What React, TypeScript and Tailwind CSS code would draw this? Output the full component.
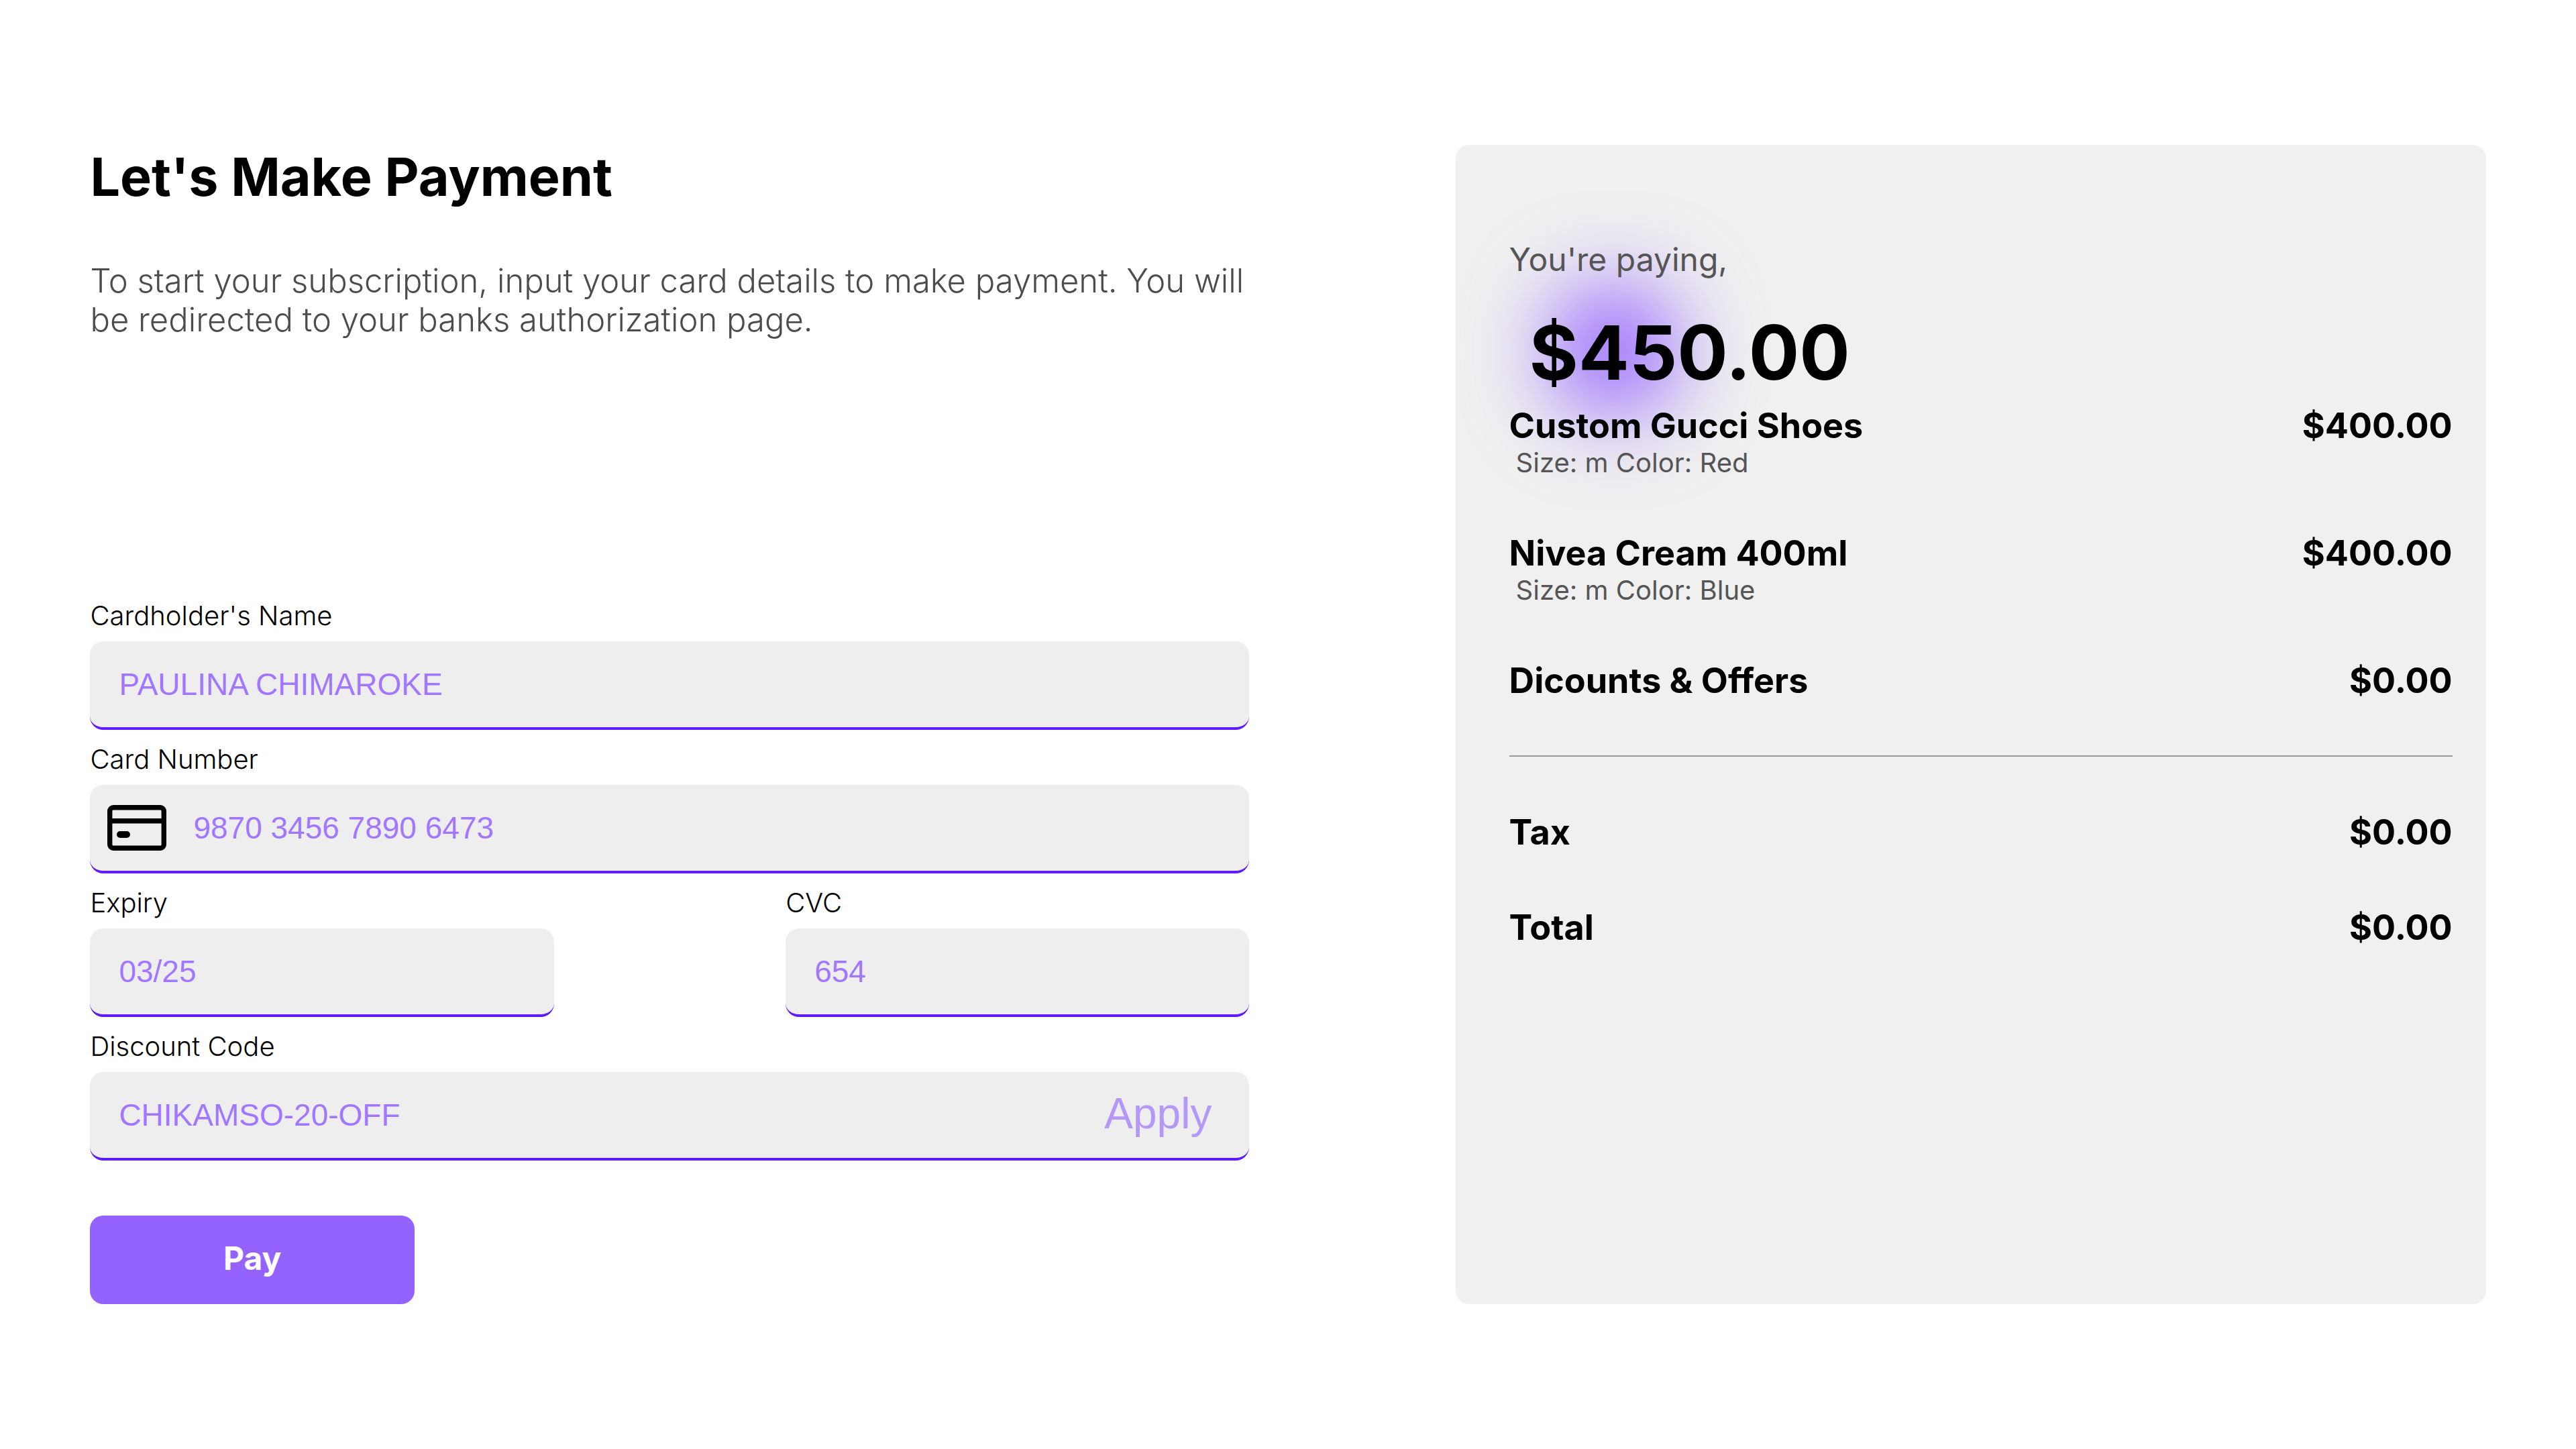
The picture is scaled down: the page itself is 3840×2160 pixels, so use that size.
import type { ReactNode } from "react";

type FieldProps = {
  id: string;
  label: string;
  value: string;
  className?: string;
  before?: ReactNode;
  after?: ReactNode;
};

function Field({ id, label, value, className = "", before, after }: FieldProps) {
  return (
    <div className={`flex flex-col ${className}`}>
      <label htmlFor={id} className="text-[40px] leading-[48px] font-light text-black">
        {label}
      </label>
      <div className="mt-[14px] flex h-[132px] items-center rounded-[20px] border-b-4 border-[#611bff] bg-[#eeeeee]">
        {before}
        <input
          id={id}
          type="text"
          defaultValue={value}
          className={`h-full min-w-0 flex-1 bg-transparent font-['Liberation_Sans',Arial,sans-serif] text-[46px] text-[#a277ff] outline-none ${
            before ? "pl-10" : "pl-[43px]"
          }`}
        />
        {after}
      </div>
    </div>
  );
}

function CardIcon() {
  return (
    <svg viewBox="0 0 88 68" className="ml-[26px] h-[68px] w-[88px] shrink-0" aria-hidden="true">
      <rect x="3.7" y="3.7" width="80.6" height="60.6" rx="5.3" fill="none" stroke="#000" strokeWidth="7.4" />
      <path d="M4 23.8h80" stroke="#000" strokeWidth="7.4" />
      <path d="M19 44h10" stroke="#000" strokeWidth="10" strokeLinecap="round" />
    </svg>
  );
}

function Row({ name, price, detail }: { name: string; price: string; detail?: string }) {
  return (
    <li>
      <div className="flex justify-between text-[52px] leading-[62px] font-bold text-black">
        <span>{name}</span>
        <span>{price}</span>
      </div>
      {detail && <p className="pl-[10px] text-[40px] leading-[48px] text-[#555555]">{detail}</p>}
    </li>
  );
}

export default function App() {
  return (
    <main className="flex min-h-screen items-stretch justify-between bg-white px-[3.5%] py-[216px] font-['Inter',sans-serif]">
      <form className="flex w-[45vw] flex-col justify-between" onSubmit={(e) => e.preventDefault()}>
        <header>
          <h1 className="text-[79px] leading-[94px] font-bold text-black">Let's Make Payment</h1>
          <p className="mt-20 text-[49px] leading-[58px] font-light text-[#4c4c4c]">
            To start your subscription, input your card details to make payment. You will be redirected to your banks
            authorization page.
          </p>
        </header>
        <div>
          <div className="flex flex-col gap-5">
            <Field id="name" label="Cardholder's Name" value="PAULINA CHIMAROKE" />
            <Field id="number" label="Card Number" value="9870 3456 7890 6473" before={<CardIcon />} />
            <div className="flex justify-between">
              <Field id="expiry" label="Expiry" value="03/25" className="w-2/5" />
              <Field id="cvc" label="CVC" value="654" className="w-2/5" />
            </div>
            <Field
              id="discount"
              label="Discount Code"
              value="CHIKAMSO-20-OFF"
              after={
                <button
                  type="button"
                  className="mr-14 pb-1 font-['Liberation_Sans',Arial,sans-serif] text-[64px] text-[#b497f8]"
                >
                  Apply
                </button>
              }
            />
          </div>
          <button
            type="submit"
            className="mt-[82px] h-[132px] w-[28%] rounded-[20px] bg-[#9362ff] pb-1 text-[48px] font-bold text-white"
          >
            Pay
          </button>
        </div>
      </form>

      <section className="w-[40vw] rounded-[20px] bg-[#f0f0f0] pt-[142px] pr-[50px] pl-20">
        <p className="relative z-10 text-[48px] leading-[58px] text-[#555555]">You're paying,</p>
        <div className="relative mt-[41px] mb-[11px] pl-[30px]">
          <div
            aria-hidden="true"
            className="absolute top-[-30px] left-[60px] size-[190px] rounded-full bg-[#9362ff] blur-[64px]"
          />
          <p className="relative text-[112px] leading-[136px] font-bold text-black">$450.00</p>
        </div>
        <ul className="relative flex flex-col gap-20">
          <Row name="Custom Gucci Shoes" price="$400.00" detail="Size: m Color: Red" />
          <Row name="Nivea Cream 400ml" price="$400.00" detail="Size: m Color: Blue" />
          <Row name="Dicounts & Offers" price="$0.00" />
          <li role="separator" className="h-1 border-t-2 border-[#9a9a9a]" />
          <Row name="Tax" price="$0.00" />
          <Row name="Total" price="$0.00" />
        </ul>
      </section>
    </main>
  );
}
